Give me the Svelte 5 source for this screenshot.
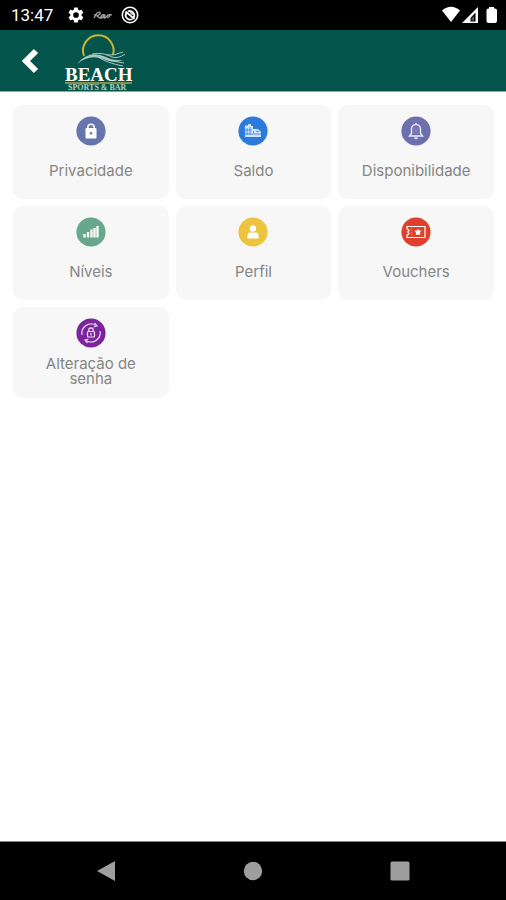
<script>
  const tiles = [
    { label: 'Privacidade', icon: 'lock', color: '#6676ad' },
    { label: 'Saldo', icon: 'balance', color: '#2c7bdc' },
    { label: 'Disponibilidade', icon: 'bell', color: '#6e70ae' },
    { label: 'Níveis', icon: 'bars', color: '#68a68d' },
    { label: 'Perfil', icon: 'person', color: '#ecc440' },
    { label: 'Vouchers', icon: 'ticket', color: '#df402b' },
    { label: 'Alteração de senha', icon: 'password', color: '#7a259c', long: true }
  ];
</script>

<div class="app">
  <div class="status">
    <span class="time">13:47</span>
    <svg class="gear" width="18" height="18" viewBox="0 0 24 24" aria-hidden="true">
      <path fill="#fff" fill-rule="evenodd" d="M19.4 13a7.600 7.600 0 0 0 0-2l2.100-1.600a.5.5 0 0 0 .1-.7l-2-3.400a.5.5 0 0 0-.6-.2l-2.500 1a7.300 7.300 0 0 0-1.700-1l-.4-2.600a.5.5 0 0 0-.5-.5h-4a.5.5 0 0 0-.5.5L9 5.100a7.700 7.700 0 0 0-1.700 1l-2.500-1a.5.500 0 0 0-.6.2l-2 3.400a.5.5 0 0 0 .1.700L4.500 11a7.900 7.900 0 0 0 0 2l-2.200 1.600a.5.5 0 0 0-.1.700l2 3.400c.1.200.4.300.6.200l2.500-1a7.300 7.300 0 0 0 1.700 1l.4 2.600c0 .3.200.5.500.5h4c.3 0 .5-.2.500-.5l.4-2.600a7.700 7.700 0 0 0 1.700-1l2.500 1c.2.100.5 0 .6-.2l2-3.400a.5.5 0 0 0-.1-.7zM12 15.800a3.800 3.800 0 1 1 0-7.600 3.800 3.800 0 0 1 0 7.600z" />
    </svg>
    <svg class="scribble" width="20" height="9" viewBox="0 0 20 9" fill="none" stroke="#a5a5a5" stroke-width="1.300" aria-hidden="true">
      <path d="M1 7 4 2q4-2 3 1L4 5l3 2 2-3q3-1 1 2-2 2-2 0 1-3 4-2-2 4 0 3l3-3q3-1 1 2-2 1-2-1 2-2 5-1M1 4l3-1" />
    </svg>
    <svg width="18" height="18" viewBox="0 0 18 18" fill="none" stroke="#fff" aria-hidden="true">
      <circle cx="9" cy="9" r="7.700" stroke-width="1.600" />
      <path d="M4.500 5.500 13.500 13M12.800 11.500a4.500 4.500 0 0 0-6-6M5.200 7a4.500 4.500 0 0 0 6.200 6" stroke-width="1.800" />
      <path d="M9 6.800l2 .2.200 2" stroke-width="1.200" />
    </svg>
    <svg class="signals" width="56" height="18" viewBox="0 0 56 18" aria-hidden="true">
      <path fill="#fff" d="M0 4.500Q9-3 18 4.500L9 16z" />
      <path fill="#fff" fill-rule="evenodd" d="M20 17 36 1v16zM28.500 12v3.500h5V6.500z" />
      <path fill="#fff" d="M29.500 12.500 32 10v4.500h-2.500z" opacity=".35" />
      <path fill="#fff" d="M47 1h5v1.500h1q2 0 2 2V15q0 2-2 2h-6.500q-2 0-2-2V4.500q0-2 2-2h.5z" />
    </svg>
  </div>

  <header>
    <button class="back" aria-label="Voltar">
      <svg width="18" height="26" viewBox="0 0 18 26" aria-hidden="true">
        <path d="M15 3 5 13l10 10" fill="none" stroke="#fff" stroke-width="6" />
      </svg>
    </button>
    <svg class="logo" width="72" height="60" viewBox="0 0 72 60" role="img" aria-label="Beach Sports & Bar">
      <path d="M21 25A15.300 15.300 0 1 1 50 24" fill="none" stroke="#c5b637" stroke-width="2" />
      <path d="M14 33q12-15 29-7 8 4 18 3-10 4-21-1-14-5-26 5z" fill="#a9c8bf" />
      <path d="M29 23q12-2 20 3 6 2 13-3M35 26q9 6 25 9M39 26q9 5 22 6M43 24q8 1 17-3" fill="none" stroke="#a9c8bf" stroke-width="1" />
      <text x="2" y="50" font-size="19" fill="#fff">BEACH</text>
      <path d="M2 52h67" stroke="#a6a746" stroke-width="1.300" />
      <text x="5" y="59" font-size="8" fill="#b8cec0">SPORTS &amp; BAR</text>
    </svg>
  </header>

  <main>
    {#each tiles as tile}
      <button class="tile" class:long={tile.long}>
        <svg width="30" height="30" viewBox="0 0 30 30" fill="none" aria-hidden="true">
          <circle cx="15" cy="15" r="14.600" fill={tile.color} />
          {#if tile.icon === 'lock'}
            <path d="M11.800 13v-1.500a3.200 3.200 0 0 1 6.400 0V13" stroke="#fff" stroke-width="1.500" />
            <rect x="9.500" y="12" width="11" height="10.500" rx="1" fill="#fff" />
            <circle cx="15" cy="17.200" r="1.300" fill={tile.color} />
          {:else if tile.icon === 'balance'}
            <path d="M7 9.500h3V8h3v2h2v3h5l3 3v5H7z" fill="#e6f0ff" opacity=".9" />
            <path d="M9 12v7M12 11v8M7 14h7M7 18h16M15.500 15v2M18 15l3 1" stroke={tile.color} stroke-width=".8" />
          {:else if tile.icon === 'bell'}
            <path d="M8.500 20h13l-2-2.500V13a4.500 4.500 0 0 0-9 0v4.500zM15 7v2M13.500 21.500q1.500 2 3 0" stroke="#e8eaff" stroke-width="1.400" />
            <path d="M13 12v6M15 11v7M17 12v6" stroke="#8d92cd" stroke-width=".7" />
          {:else if tile.icon === 'bars'}
            <path d="M8.500 20.500V17M12 20.500V15M15.500 20.500v-8M18.500 20.500V11M21.500 20.500V9" stroke="#fff" stroke-width="2.300" />
          {:else if tile.icon === 'person'}
            <circle cx="15" cy="11.500" r="3.200" fill="#fff" />
            <path d="M9.500 21.500v-3q0-3 3-3h5q3 0 3 3v3z" fill="#fff" />
          {:else if tile.icon === 'ticket'}
            <path d="M6 9.500h18v11H6V18q2-.5 2-1.500T6 15q2-.5 2-1.500T6 12z" stroke="#fff" stroke-width="1.200" />
            <path d="M10.500 11v8" stroke="#ffb0a5" stroke-width=".8" stroke-dasharray="1 1" />
            <path d="m17 11.500 1 2 2.500.3-1.500 1.700.3 2.300H14.700l.3-2.300-1.500-1.700 2.500-.3z" fill="#fff" />
          {:else}
            <path d="M6 17A9.200 9.200 0 0 1 20 7.500M24 13A9.200 9.200 0 0 1 10 22.500" stroke="#e4c6ef" stroke-width="1.300" />
            <path d="m18.500 5 2.500 3-3.500 1M11.500 25 9 22l3.500-1" stroke="#e4c6ef" stroke-width="1.300" />
            <rect x="11.500" y="13.500" width="7" height="5.500" rx="1" stroke="#f2e2f7" stroke-width="1.200" />
            <path d="M12.800 13.500V12a2.200 2.200 0 0 1 4.400 0v1.500M15 15v2.500" stroke="#f2e2f7" stroke-width="1.200" />
          {/if}
        </svg>
        <span>{tile.label}</span>
      </button>
    {/each}
  </main>

  <nav>
    <button aria-label="Anterior">
      <svg width="20" height="22" viewBox="0 0 20 22"><path d="M1 11 19 1v20z" fill="#9e9e9e" /></svg>
    </button>
    <button aria-label="Início">
      <svg width="20" height="20" viewBox="0 0 20 20"><circle cx="10" cy="10" r="9.200" fill="#9e9e9e" /></svg>
    </button>
    <button aria-label="Recentes">
      <svg width="20" height="20" viewBox="0 0 20 20"><rect x=".5" y=".5" width="19" height="19" rx="1.500" fill="#9e9e9e" /></svg>
    </button>
  </nav>
</div>

<style>
  :global(body) {
    margin: 0;
  }
  .app {
    display: flex;
    flex-direction: column;
    min-height: 100vh;
    background: #fff;
    font-family: Inter, "Noto Sans", sans-serif;
  }
  button {
    border: 0;
    padding: 0;
    margin: 0;
    background: none;
    font: inherit;
    cursor: pointer;
  }
  svg {
    display: block;
    flex: none;
  }
  .status {
    display: flex;
    align-items: center;
    height: 30px;
    padding: 0 8px 0 11px;
    background: #000;
  }
  .time {
    font: 17px/30px Roboto, sans-serif;
    color: #fff;
  }
  .gear {
    margin-left: 14px;
  }
  .scribble {
    margin: 0 8px;
  }
  .signals {
    margin-left: auto;
  }
  header {
    display: flex;
    align-items: center;
    height: 61px;
    background: #03544b;
    border-bottom: 1px solid #8da7a3;
  }
  .back {
    padding-left: 21px;
  }
  .logo {
    margin-left: 24px;
  }
  .logo text {
    font-family: "Liberation Serif", serif;
    font-weight: 700;
  }
  main {
    flex: 1;
    display: grid;
    grid-template-columns: repeat(3, minmax(0, 1fr));
    align-content: start;
    gap: 7px;
    padding: 13px 12px 13px 13px;
  }
  .tile {
    display: flex;
    flex-direction: column;
    align-items: center;
    padding: 11px 20px;
    border-radius: 10px;
    background: #f7f7f7;
    color: #858585;
    font-size: 15px;
    line-height: 15px;
    text-align: center;
  }
  .tile span {
    margin: 17px 0 10px;
    white-space: nowrap;
  }
  .tile.long span {
    margin: 8px 0 1px;
    white-space: normal;
  }
  nav {
    display: flex;
    align-items: center;
    height: 58px;
    padding: 0 33px;
    background: #000;
    border-top: 1px solid #858585;
  }
  nav button {
    flex: 1;
    display: flex;
    justify-content: center;
  }
</style>
